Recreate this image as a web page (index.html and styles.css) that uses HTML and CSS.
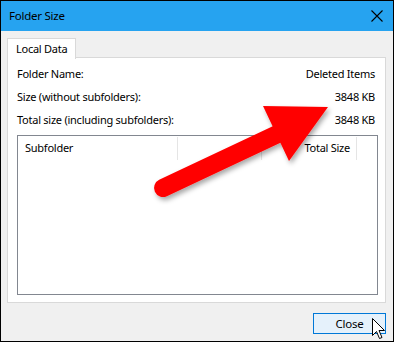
FILE: index.html
```html
<!DOCTYPE html>
<html>
<head>
<meta charset="utf-8">
<link rel="stylesheet" href="styles.css">
</head>
<body>
<div class="window">
  <div class="titlebar">
    <span class="title">Folder Size</span>
    <svg class="close-x" width="12" height="12" viewBox="0 0 12 12"><path d="M0.5 0.5 L11.5 11.5 M11.5 0.5 L0.5 11.5" stroke="#000" stroke-width="1.1" fill="none"/></svg>
  </div>
  <div class="content">
    <div class="tabs"><div class="tab">Local Data</div></div>
    <div class="panel">
      <div class="row"><span>Folder Name:</span><span>Deleted Items</span></div>
      <div class="row"><span>Size (without subfolders):</span><span>3848 KB</span></div>
      <div class="row"><span>Total size (including subfolders):</span><span>3848 KB</span></div>
      <div class="listview">
        <div class="header">
          <div class="col c1">Subfolder</div>
          <div class="col c2"></div>
          <div class="col c3">Total Size</div>
        </div>
      </div>
    </div>
    <div class="footer"><button class="btn">Close</button></div>
  </div>
  <svg class="annot" width="394" height="342" viewBox="0 0 394 342">
    <defs>
      <filter id="sh" x="-20%" y="-20%" width="140%" height="140%">
        <feDropShadow dx="2" dy="3" stdDeviation="2.5" flood-color="#000" flood-opacity="0.35"/>
      </filter>
    </defs>
    <g filter="url(#sh)" fill="#ff0000">
      <path d="M163 188 L284 131" stroke="#ff0000" stroke-width="18" stroke-linecap="round"/>
      <polygon points="328,107 263,106 289,161"/>
    </g>
    <path class="cursor" d="M372.5 318.5 L372.5 335.5 L376.5 331.5 L379.5 338.5 L382 337.5 L379 330.5 L384.5 330.5 Z" fill="#fff" stroke="#000" stroke-width="1"/>
  </svg>
</div>
</body>
</html>
```
FILE: styles.css
```css
* { box-sizing: border-box; }
html, body { margin: 0; padding: 0; background: #f0f0f0; }
body { font-family: "Noto Sans", "Liberation Sans", sans-serif; font-size: 11px; letter-spacing: -0.25px; color: #000; }
.window {
  position: relative;
  width: 394px; height: 342px;
  border: 1px solid #000;
  background: #f0f0f0;
  display: flex; flex-direction: column;
  overflow: hidden;
}
.titlebar {
  height: 30px; flex: none;
  background: #26a3f0;
  display: flex; align-items: center; justify-content: space-between;
  padding: 0 10px 0 8px;
}
.title { font-size: 11.5px; line-height: 16px; }
.close-x { display: block; }
.content { flex: 1; display: flex; flex-direction: column; padding: 7px 7px 7px 6px; }
.tabs { display: flex; height: 20px; position: relative; z-index: 1; margin-bottom: -1px; }
.tab {
  width: 69px; height: 21px;
  background: #fff;
  border: 1px solid #d9d9d9; border-bottom: none;
  padding-left: 8px; line-height: 19px;
}
.panel {
  height: 246px; flex: none;
  background: #fff;
  border: 1px solid #d9d9d9;
  padding: 4px 7px 0 9px;
}
.row { height: 23px; display: flex; justify-content: space-between; align-items: center; padding-right: 3px; }
.listview { margin-top: 4px; height: 160px; border: 1px solid #828790; background: #fff; }
.header { display: flex; height: 24px; margin-top: 1px; }
.col { height: 23px; border-right: 1px solid #e5e5e5; line-height: 22px; }
.c1 { width: 160px; padding-left: 7px; }
.c2 { width: 84px; }
.c3 { width: 95px; text-align: right; padding-right: 6px; }
.footer { flex: 1; display: flex; justify-content: flex-end; align-items: flex-end; }
.btn {
  width: 73px; height: 21px;
  border: 1px solid #0078d7; background: #e5f1fb;
  font-family: inherit; font-size: 11.5px; letter-spacing: -0.2px; color: #000; padding: 0; line-height: 18px;
}
.annot { position: absolute; left: -1px; top: -1px; pointer-events: none; }
```
